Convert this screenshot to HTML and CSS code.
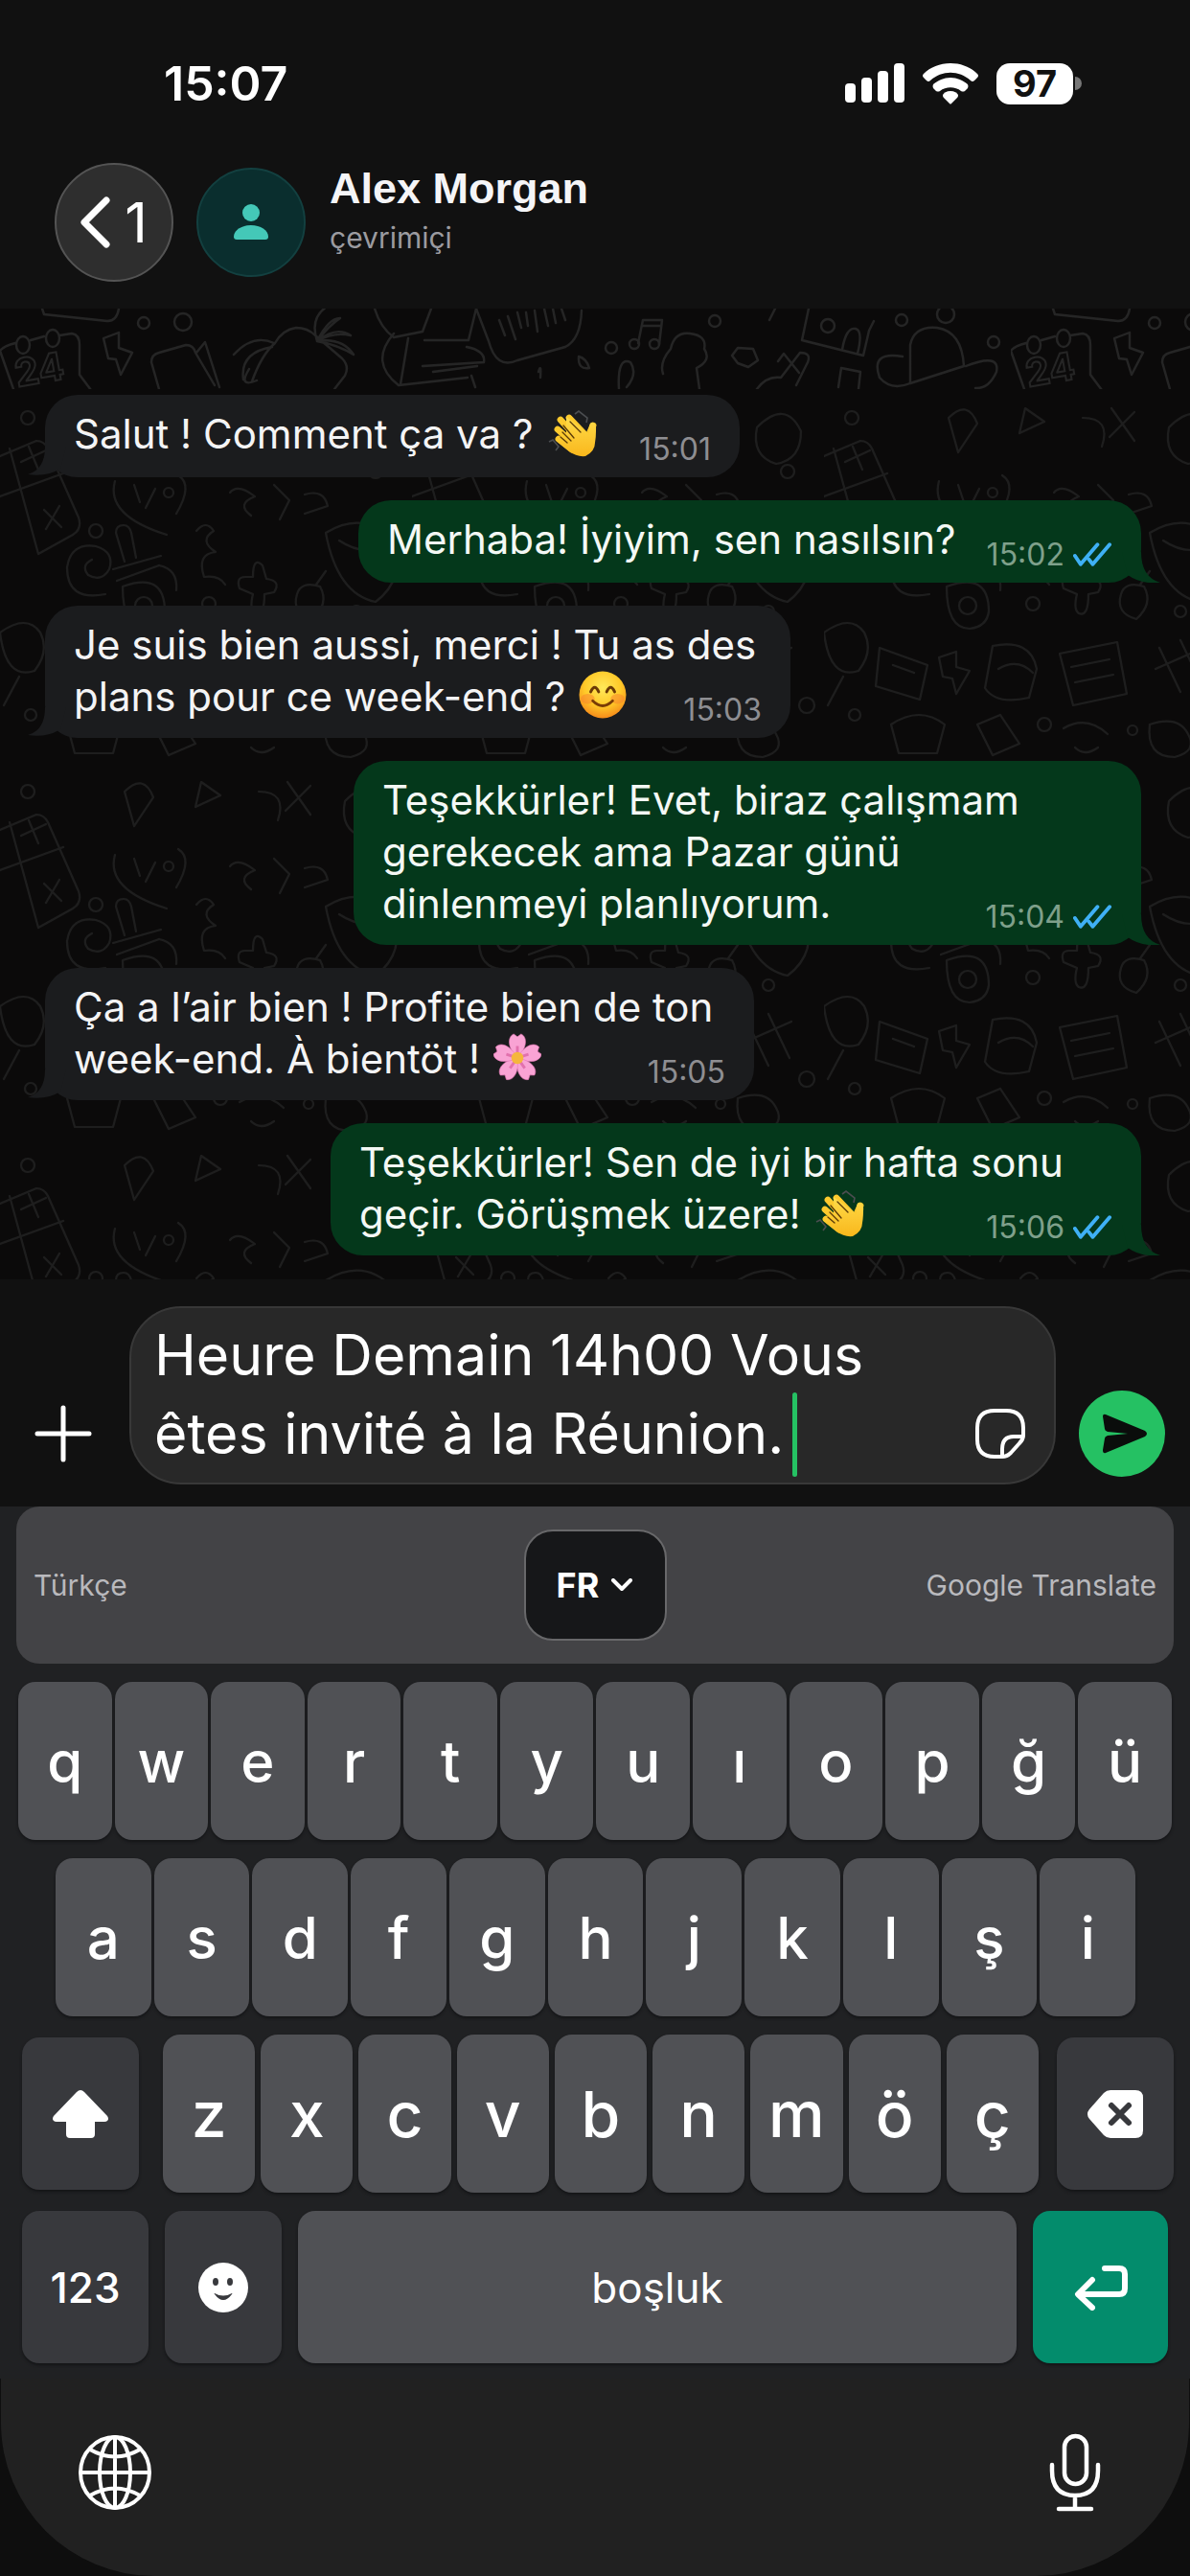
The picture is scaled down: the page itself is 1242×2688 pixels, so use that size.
FILE: index.html
```html
<!DOCTYPE html>
<html lang="tr">
<head>
<meta charset="utf-8">
<meta name="viewport" content="width=device-width">
<title>Alex Morgan</title>
<link rel="stylesheet" href="styles.css">
</head>
<body>
<svg width="0" height="0" class="defs" aria-hidden="true">
  <defs>
    <radialGradient id="face" cx="50%" cy="35%" r="65%"><stop offset="0" stop-color="#ffe95a"/><stop offset="60%" stop-color="#ffc928"/><stop offset="100%" stop-color="#f58a1a"/></radialGradient>
    <linearGradient id="skin" x1="0" y1="0" x2="0" y2="1"><stop offset="0" stop-color="#ffdc4a"/><stop offset="1" stop-color="#f9b71c"/></linearGradient>
    <symbol id="wave" viewBox="0 0 80 70">
      <g fill="none" stroke="#4b4d50" stroke-width="1.6"><path d="M41 12l4-3 9 7-1 5M14 41l4-2 6 7-3 4"/></g>
      <g stroke-linecap="round" fill="none" stroke="#fdca2e" stroke-width="6.8">
        <path d="M35 16l18 19M26 18l19 21M23 28l18 16M24 38l14 11"/>
        <path d="M60 24q-3 6-6 14"/>
      </g>
      <path fill="url(#skin)" d="M32 15l24 18q-1-11 2-12 6-1 5 9 0 6-1 12 0 9-10 14-9 1-17-5L24 42l8-6z"/>
      <g stroke="#5a3a08" stroke-width="1.3" stroke-linecap="round"><path d="M29 24l11 13M28 31l9 9M26 36l7 6M36 20l11 11"/></g>
    </symbol>
    <symbol id="smile" viewBox="0 0 48 48">
      <circle cx="24" cy="24" r="23.5" fill="url(#face)"/>
      <ellipse cx="9" cy="28" rx="7" ry="5" fill="#f7802e" opacity=".5"/><ellipse cx="39" cy="28" rx="7" ry="5" fill="#f7802e" opacity=".5"/>
      <path d="M12 21q4-9 8 0M28 21q4-9 8 0" fill="none" stroke="#6b3a06" stroke-width="2.8" stroke-linecap="round"/>
      <path d="M14 30q10 10 20 0" fill="none" stroke="#7a3c06" stroke-width="2.6" stroke-linecap="round"/>
    </symbol>
    <symbol id="flower" viewBox="0 0 52 52">
      <g fill="#f9a3d4" stroke="#e879b8" stroke-width=".6">
        <path id="petal" d="M26 27C15 16 15 4 22 1l4 3 4-3c7 3 7 15-4 26z"/>
        <use href="#petal" transform="rotate(72 26 27)"/><use href="#petal" transform="rotate(144 26 27)"/>
        <use href="#petal" transform="rotate(216 26 27)"/><use href="#petal" transform="rotate(288 26 27)"/>
      </g>
      <path d="M26 27V14M26 27l12-4M26 27l8 11M26 27l-8 11M26 27l-12-4" stroke="#d0498f" stroke-width="3" opacity=".55"/>
      <circle cx="26" cy="27" r="6.5" fill="#f5b63c"/>
    </symbol>
    <symbol id="ticks" viewBox="0 0 42 28">
      <path d="M2 15l6 9L26 3M17 19l4 5L39 3" fill="none" stroke="#3fb0f5" stroke-width="4" stroke-linecap="round" stroke-linejoin="round"/>
    </symbol>
    <symbol id="tail-in" viewBox="0 0 40 32"><path d="M18 0Q18 24 0 29q20 3 34-6L40 0z" fill="#1b1c1e"/></symbol>
    <symbol id="tail-out" viewBox="0 0 40 32"><path d="M20 0q0 26 20 32-20 2-34-8L0 0z" fill="#04381b"/></symbol>
  </defs>
</svg>

<main class="phone">
  <header class="top">
    <div class="status">
      <time class="clock">15:07</time>
      <div class="indicators">
        <svg width="62" height="42" viewBox="0 0 62 42" fill="#fff" role="img" aria-label="Sinyal"><rect y="21" width="11" height="20" rx="4"/><rect x="17" y="15" width="11" height="26" rx="4"/><rect x="34" y="8" width="11" height="33" rx="4"/><rect x="51" width="11" height="41" rx="4"/></svg>
        <svg width="58" height="43" viewBox="0 0 58 43" fill="#fff" role="img" aria-label="Wi-Fi"><path d="M29 0C18 0 8 4 1 11q-2 2 0 4l3 3q2 2 4 0c12-11 30-11 42 0q2 2 4 0l3-3q2-2 0-4C50 4 40 0 29 0z"/><path d="M29 15c-7 0-13 3-18 7q-1 2 0 4l3 3q2 1 4 0c6-5 16-5 22 0q2 1 4 0l3-3q1-2 0-4c-5-4-11-7-18-7z"/><path d="M29 29c-4 0-7 2-8 4 0 1 0 2 1 3l6 6q1 1 2 0l6-6c1-1 1-2 1-3-1-2-4-4-8-4z"/></svg>
        <span class="battery"><span class="level">97</span><i class="nub"></i></span>
      </div>
    </div>
    <div class="contact">
      <button class="back" aria-label="Geri, 1 okunmamış">
        <svg width="32" height="54" viewBox="0 0 32 54" fill="none" stroke="#fff" stroke-width="7" stroke-linecap="round" stroke-linejoin="round"><path d="M27 4L4 27l23 23"/></svg>
        <span>1</span>
      </button>
      <span class="avatar">
        <svg width="36" height="38" viewBox="0 0 36 38" fill="#44c8b8"><circle cx="18" cy="9" r="9"/><path d="M0 34C0 27 8 22 18 22s18 5 18 12q0 3-3 3H3q-3 0-3-3z"/></svg>
      </span>
      <div class="who"><h1>Alex Morgan</h1><p>çevrimiçi</p></div>
    </div>
  </header>

  <section class="chat">
    <svg class="wallpaper" width="100%" height="100%" aria-hidden="true">
      <defs>
        <pattern id="strip" width="1055" height="84" patternUnits="userSpaceOnUse">
          <g fill="none" stroke="#252525" stroke-width="2.4" stroke-linecap="round" stroke-linejoin="round">
            <path d="M14 84L0 44q4-5 16-8M32 33l14-4M62 28l13-2q8 1 8 12v31l12 16"/><ellipse cx="24" cy="38" rx="7" ry="9"/><ellipse cx="55" cy="31" rx="7" ry="9"/>
            <path d="M44 0l2 6 66 7q10 0 12-13M108 31l16-6v16l14 5-12 23-5-16-8-1z"/><circle cx="150" cy="15" r="6"/><circle cx="191" cy="14" r="9"/>
            <path d="M166 84l-8-28q0-8 8-10l28-8q8 0 10 8l20 34M205 46l9-11 15 47"/>
            <path d="M263 76q10-28 24-40 8-14 22-16 12 0 20 8l28 24q8 8 3 18l-11 14M244 48q20-22 42-12M254 74q-4-28 30-34M268 75q-20 8-8-12M331 34q-8-24 10-36M331 34q12-24 24-24-12 8-24 24M331 34q20-16 35-6-18-4-35 6M331 34q26-4 38 14-16-10-38-14"/>
            <path d="M391 0q6 20 20 30l30-6L450 0M411 26q-26 30 5 54l72-8M426 31l-8 48M443 33h46l8-33 13 34q8 30 30 20l50-14q16-8 17-38M441 60l64-4q2-12-18-16M452 66l46-6M492 70l4 12"/>
            <path d="M521 12l6 16M530 8l8 24M540 4l4 16M549 4l2 14M558 2l3 22M568 0l4 18M577 0l3 15M586 0l4 12"/>
            <path d="M604 50q8 2 11 12-12 2-11-12zM562 66q3-10 2 6"/>
            <circle cx="638" cy="41" r="6"/><path d="M666 36l5-24 20 0-3 25M670 18h20"/><circle cx="662" cy="37" r="5"/><circle cx="683" cy="37" r="5"/><circle cx="746" cy="13" r="6"/>
            <path d="M692 68q-4-12 8-26 4-18 20-16 18 2 15 16 8 12-8 20l3 22M646 84q-2-34 12-28 8 12-4 26"/>
            <path d="M770 41l16 1 5 12-10 7-11-4-6-8zM803 12l7-14M844 0l-7 33 64 16 6-26 5-10M879 43q4-24 14-22 8 2 2 26"/><circle cx="864" cy="18" r="7"/><circle cx="941" cy="12" r="6"/><circle cx="987" cy="6" r="9"/>
            <path d="M790 84q10-14 25-12l20-26q12 0 8 10l-12 24M812 55l6-8 16 20M875 82l3-20 20 4-2 18M950 78v-40q4-20 28-18 26 4 28 40l-56 18q-20 8-32-6-10-28 24-22M1008 60q36-14 32 6-8 18-22 17"/><circle cx="1037" cy="35" r="6"/>
          </g>
          <text x="18" y="82" transform="rotate(-10 18 82)" class="day">24</text>
        </pattern>
        <pattern id="doodles" width="430" height="390" patternUnits="userSpaceOnUse">
          <g fill="none" stroke="#1e1e1e" stroke-width="2.2" stroke-linecap="round" stroke-linejoin="round">
            <circle cx="29" cy="30" r="7"/><path d="M0 70l38-16q8 0 12 8l32 72q4 12-6 18l-36 20L10 62M0 112l66-24M22 76l26-12M30 60l10 24M46 126l18 18M62 122l-14 24"/>
            <path d="M120 96q-10 36 54 56M140 100l6 18M162 104l-10 20M186 90q16 10-2 40"/><circle cx="176" cy="108" r="5"/>
            <circle cx="100" cy="148" r="7"/><path d="M130 180l-9-30q0-8 8-8 6 0 8 8l5 26M118 188l50-14M122 200l44-16M110 214q-40 8-40-28 4-26 30-22 20 6 14 24-8 14-22 6-8-10 4-16"/>
            <path d="M128 206q44-16 44 26-2 16-20 18-24 0-24-44z"/><circle cx="150" cy="226" r="9"/><path d="M166 184q20 4 18 26"/>
            <path d="M205 148q10-12 18 0-16 10 2 22-20 2-12 26 16-2 22 8M240 108q8-10 26 4-20 8-4 20M286 100l16 16-10 20M318 110q20-6 24 12l-24 8"/>
            <path d="M250 208q-4-12 6-12h8q0-22 10-12l4 14q16 2 8 14l-10 2q0 24-10 20-6-4-2-20zM310 214q4-14 24-8 10 18-8 34-22-6-16-26zM330 204l10-14"/>
            <circle cx="218" cy="224" r="7"/><circle cx="372" cy="232" r="6"/><circle cx="392" cy="86" r="7"/>
            <path d="M360 40q30-30 46 4 0 30-26 34-26-8-20-38M340 150q40-24 70 8 14 40-18 64-40-8-52-72zM354 158q30 20 56 0"/>
            <path d="M0 254q28-20 42 0 10 20-6 40-30 10-36-40M20 300l-16 30M58 270l50 18-8 36-46-14zM72 288l22 8"/><circle cx="32" cy="340" r="6"/>
            <path d="M120 280l18-6v16l14 4-14 24-4-16-10-2zM176 268q40-8 46 24l-8 30q-34 8-46-10zM182 292q20-12 36 4"/>
            <path d="M246 276l60-12 10 54-56 12zM258 290l40-8M262 306l40-8M350 270l22 46M372 262l22 46M346 292l50-22"/>
            <path d="M70 350q30-20 56 0l-8 30H78zM160 350l24-10 20 30-28 12zM250 354q24-14 46 6M262 374q10 10 24 0M340 350q30-10 40 10 10 18-14 24-30 0-26-34"/>
            <circle cx="230" cy="350" r="7"/><circle cx="412" cy="330" r="8"/><circle cx="322" cy="356" r="5"/><path d="M210 20l20 14-26 12zM130 30q20-20 30 6l-20 30zM270 30q30 0 20 30M300 20l24 34M324 24l-26 26"/>
          </g>
        </pattern>
      </defs>
      <rect width="100%" height="84" fill="url(#strip)"/>
      <svg y="84" width="100%" height="100%"><rect width="100%" height="100%" fill="url(#doodles)"/></svg>
    </svg>

    <article class="msg in w1"><p>Salut ! Comment ça va ? <svg class="emoji" role="img" aria-label="el sallama"><use href="#wave"/></svg></p><footer><time>15:01</time></footer><svg class="tail"><use href="#tail-in"/></svg></article>
    <article class="msg out w2"><p>Merhaba! İyiyim, sen nasılsın?</p><footer><time>15:02</time><svg class="ticks"><use href="#ticks"/></svg></footer><svg class="tail"><use href="#tail-out"/></svg></article>
    <article class="msg in w3"><p>Je suis bien aussi, merci ! Tu as des<br>plans pour ce week-end ? <svg class="emoji small" role="img" aria-label="gülümseme"><use href="#smile"/></svg></p><footer><time>15:03</time></footer><svg class="tail"><use href="#tail-in"/></svg></article>
    <article class="msg out w4"><p>Teşekkürler! Evet, biraz çalışmam<br>gerekecek ama Pazar günü<br>dinlenmeyi planlıyorum.</p><footer><time>15:04</time><svg class="ticks"><use href="#ticks"/></svg></footer><svg class="tail"><use href="#tail-out"/></svg></article>
    <article class="msg in w5"><p>Ça a l’air bien ! Profite bien de ton<br>week-end. À bientöt ! <svg class="emoji small" role="img" aria-label="çiçek"><use href="#flower"/></svg></p><footer><time>15:05</time></footer><svg class="tail"><use href="#tail-in"/></svg></article>
    <article class="msg out w6"><p>Teşekkürler! Sen de iyi bir hafta sonu<br>geçir. Görüşmek üzere! <svg class="emoji" role="img" aria-label="el sallama"><use href="#wave"/></svg></p><footer><time>15:06</time><svg class="ticks"><use href="#ticks"/></svg></footer><svg class="tail"><use href="#tail-out"/></svg></article>
  </section>

  <form class="composer">
    <button type="button" class="plus" aria-label="Ekle"><svg width="60" height="60" viewBox="0 0 60 60" stroke="#fff" stroke-width="5" stroke-linecap="round"><path d="M30 3v54M3 30h54"/></svg></button>
    <div class="field">
      <textarea rows="2" aria-label="Mesaj" spellcheck="false">Heure Demain 14h00 Vous
êtes invité à la Réunion.</textarea>
      <i class="caret"></i>
      <button type="button" class="sticker" aria-label="Çıkartma"><svg width="52" height="52" viewBox="0 0 52 52" fill="none" stroke="#fff" stroke-width="4" stroke-linejoin="round"><path d="M28 50H20Q2 50 2 32V20Q2 2 20 2h12Q50 2 50 20v8q0 4-4 8L37 46q-4 4-9 4zM28 50V42Q28 29 40 29h10"/></svg></button>
    </div>
    <button type="button" class="send" aria-label="Gönder"><svg width="48" height="42" viewBox="0 0 48 42" fill="#0a0d0b"><path d="M1 3Q1 0 4 1l41 17q4 3 0 6L4 41q-3 1-3-3l2-12q0-2 3-3l21-2L6 19q-3-1-3-3z"/></svg></button>
  </form>

  <section class="keyboard">
    <div class="suggest">
      <span>Türkçe</span>
      <button class="lang">FR <svg width="24" height="14" viewBox="0 0 24 14" fill="none" stroke="#fff" stroke-width="4" stroke-linecap="round" stroke-linejoin="round"><path d="M3 2l9 9 9-9"/></svg></button>
      <span class="end">Google Translate</span>
    </div>
    <div class="row r1"><button>q</button><button>w</button><button>e</button><button>r</button><button>t</button><button>y</button><button>u</button><button>ı</button><button>o</button><button>p</button><button>ğ</button><button>ü</button></div>
    <div class="row r2"><button>a</button><button>s</button><button>d</button><button>f</button><button>g</button><button>h</button><button>j</button><button>k</button><button>l</button><button>ş</button><button>i</button></div>
    <div class="row r3">
      <button class="dark" aria-label="Shift"><svg width="58" height="54" viewBox="0 0 58 50" fill="#fff"><path d="M25 2q4-4 8 0l24 25q3 5-3 6H44v13q0 4-4 4H18q-4 0-4-4V33H4q-6-1-3-6z"/></svg></button>
      <div class="letters"><button>z</button><button>x</button><button>c</button><button>v</button><button>b</button><button>n</button><button>m</button><button>ö</button><button>ç</button></div>
      <button class="dark" aria-label="Sil"><svg width="58" height="50" viewBox="0 0 58 50"><path d="M24 0h26q8 0 8 8v34q0 8-8 8H24q-4 0-7-3L2 30q-4-5 0-10L17 3q3-3 7-3z" fill="#fff"/><path d="M25 16l18 18M43 16L25 34" stroke="#38393d" stroke-width="6" stroke-linecap="round"/></svg></button>
    </div>
    <div class="row r4">
      <button class="dark num">123</button>
      <button class="dark" aria-label="Emoji"><svg width="52" height="52" viewBox="0 0 52 52"><circle cx="26" cy="26" r="26" fill="#fff"/><g fill="#38393d"><ellipse cx="18" cy="20" rx="3" ry="4"/><ellipse cx="33" cy="20" rx="3" ry="4"/><path d="M17 32q9 5 18 0 1 0 0 1-9 12-18 0-1-1 0-1z"/></g></svg></button>
      <button class="space">boşluk</button>
      <button class="enter" aria-label="Giriş"><svg width="56" height="48" viewBox="0 0 56 48" fill="none" stroke="#fff" stroke-width="6" stroke-linecap="round" stroke-linejoin="round"><path d="M32 4h15q6 0 6 6v15q0 6-6 6H5M19 16L4 31l15 14"/></svg></button>
    </div>
  </section>
  <nav class="dock">
    <button aria-label="Dil"><svg width="76" height="78" viewBox="0 0 76 78" fill="none" stroke="#fff" stroke-width="4"><ellipse cx="38" cy="39" rx="36" ry="37"/><ellipse cx="38" cy="39" rx="16" ry="37"/><path d="M38 2v74M2 39h72M12 15q26 15 52 0M12 63q26-15 52 0"/></svg></button>
    <button aria-label="Dikte"><svg width="54" height="82" viewBox="0 0 54 82" fill="none" stroke="#fff" stroke-width="4.5" stroke-linecap="round"><rect x="16" y="3" width="23" height="50" rx="11.500"/><path d="M3 33v6q0 26 24 26t24-26v-6M27 65v14M10 79h34"/></svg></button>
  </nav>
</main>
</body>
</html>
```

FILE: styles.css
```css
* { box-sizing: border-box; }
body { margin: 0; background: #0e0e0e; color: #fff; font-family: Inter, "Liberation Sans", sans-serif; }
button { border: 0; padding: 0; margin: 0; background: none; color: inherit; font: inherit; display: flex; align-items: center; justify-content: center; }
h1, p { margin: 0; }
.defs { position: absolute; }
.phone { min-height: 100vh; display: flex; flex-direction: column; }

.top { background: #111; padding-bottom: 28px; }
.status { height: 170px; padding: 60px 113px 56px 171px; display: flex; align-items: center; justify-content: space-between; }
.clock { font-size: 50px; line-height: 54px; font-weight: 600; }
.indicators { display: flex; align-items: center; gap: 19px; }
.battery { display: flex; align-items: center; gap: 2px; }
.level { width: 80px; height: 43px; border-radius: 14px; background: #fff; color: #111; font-size: 38px; line-height: 43px; font-weight: 700; text-align: center; }
.nub { width: 7px; height: 14px; border-radius: 0 7px 7px 0; background: #777; }
.contact { display: flex; align-items: center; padding: 0 57px; }
.back { width: 124px; height: 124px; margin-right: 24px; border-radius: 50%; border: 2px solid #545454; background: #2e2e2e; gap: 14px; font-size: 58px; line-height: 60px; }
.avatar { width: 114px; height: 114px; margin-right: 25px; border-radius: 50%; border: 2px solid #134040; background: #0a2e2e; display: flex; align-items: center; justify-content: center; }
.who { align-self: flex-start; }
.who h1 { font: bold 45px/54px "Liberation Sans", Arial, sans-serif; color: #f5f5f7; }
.who p { font-size: 30px; line-height: 48px; color: #9b9ba0; }

.chat { position: relative; flex: 1; background: #0b0a0a; padding: 90px 51px 25px 47px; display: flex; flex-direction: column; gap: 24px; font-size: 42px; line-height: 54px; }
.wallpaper { position: absolute; inset: 0; }
.day { font: bold 40px Inter, sans-serif; fill: none; stroke: #252525; stroke-width: 2px; }
.msg { position: relative; min-height: 86px; max-width: 100%; padding: 14px 30px 16px; border-radius: 34px; white-space: nowrap; }
.in { align-self: flex-start; background: #1b1c1e; color: #f4f4f5; }
.out { align-self: flex-end; background: #04381b; color: #f4f8f5; }
.w1 { width: 725px; }
.w2 { width: 817px; }
.w3 { width: 778px; }
.w4 { width: 822px; }
.w5 { width: 740px; }
.w6 { width: 846px; }
.msg footer { position: absolute; right: 30px; bottom: 10px; display: flex; align-items: center; gap: 9px; font-size: 32px; line-height: 38px; color: #8e8e92; }
.out footer { color: #7fa08b; }
.ticks { width: 41px; height: 28px; }
.tail { position: absolute; bottom: 0; width: 40px; height: 32px; }
.in .tail { left: -18px; }
.out .tail { right: -20px; }
.emoji { width: 80px; height: 70px; margin: -24px -9px; vertical-align: 2px; }
.emoji.small { width: 50px; height: 50px; margin: -10px 2px; vertical-align: 2px; }

.composer { background: #111; display: flex; align-items: flex-end; gap: 24px; padding: 28px 26px 23px 21px; }
.plus, .send { width: 90px; height: 90px; margin-bottom: 8px; flex: none; }
.send { border-radius: 50%; background: #25c163; padding-left: 6px; }
.field { position: relative; flex: 1; display: flex; border: 2px solid #383838; border-radius: 54px; background: #282828; padding: 8px 30px 10px 24px; }
textarea { flex: 1; min-width: 0; border: 0; padding: 0; margin: 0; outline: 0; resize: none; overflow: hidden; background: none; color: #fff; font: 400 59px/82px Inter, sans-serif; height: 164px; }
.caret { position: absolute; left: 690px; bottom: 6px; width: 5px; height: 88px; border-radius: 3px; background: #25c163; }
.sticker { align-self: flex-end; margin-bottom: 15px; }

.keyboard { background: #202123; padding-bottom: 16px; display: flex; flex-direction: column; gap: 19px; }
.suggest { margin: 0 17px; height: 164px; padding: 0 18px; border-radius: 24px; background: #434346; display: grid; grid-template-columns: 1fr auto 1fr; align-items: center; font-size: 30px; color: #b9b9bd; }
.end { text-align: right; }
.lang { width: 149px; height: 116px; border-radius: 30px; border: 2px solid #68686a; background: #161719; color: #fff; font-size: 36px; font-weight: 700; gap: 12px; }
.row { display: flex; font-size: 60px; font-weight: 500; }
.row button { height: 165px; border-radius: 18px; background: #505155; box-shadow: 0 2px 3px #141517; }
.r1 { padding: 0 19px; gap: 3px; }
.r1 button, .r2 button, .letters button { flex: 1 1 0; }
.r2 { padding: 0 57px 0 58px; gap: 3px; }
.r3 { padding: 0 17px 0 23px; align-items: center; }
.letters { flex: 1; display: flex; gap: 6px; margin: 0 19px 0 25px; font-size: 66px; }
.row .dark, .row .space, .row .enter { height: 159px; }
.row .dark { width: 122px; background: #38393d; }
.r4 { padding: 0 23px; gap: 17px; font-size: 44px; }
.row .num { width: 132px; font-weight: 500; }
.row .space { flex: 1; font-weight: 400; }
.row .enter { width: 141px; background: #038c6c; }
.dock { margin: 0 1px; height: 206px; padding: 0 92px 0 81px; border-radius: 0 0 160px 160px; background: #212121; display: flex; justify-content: space-between; align-items: center; }
.dock button { padding-bottom: 10px; }
```
